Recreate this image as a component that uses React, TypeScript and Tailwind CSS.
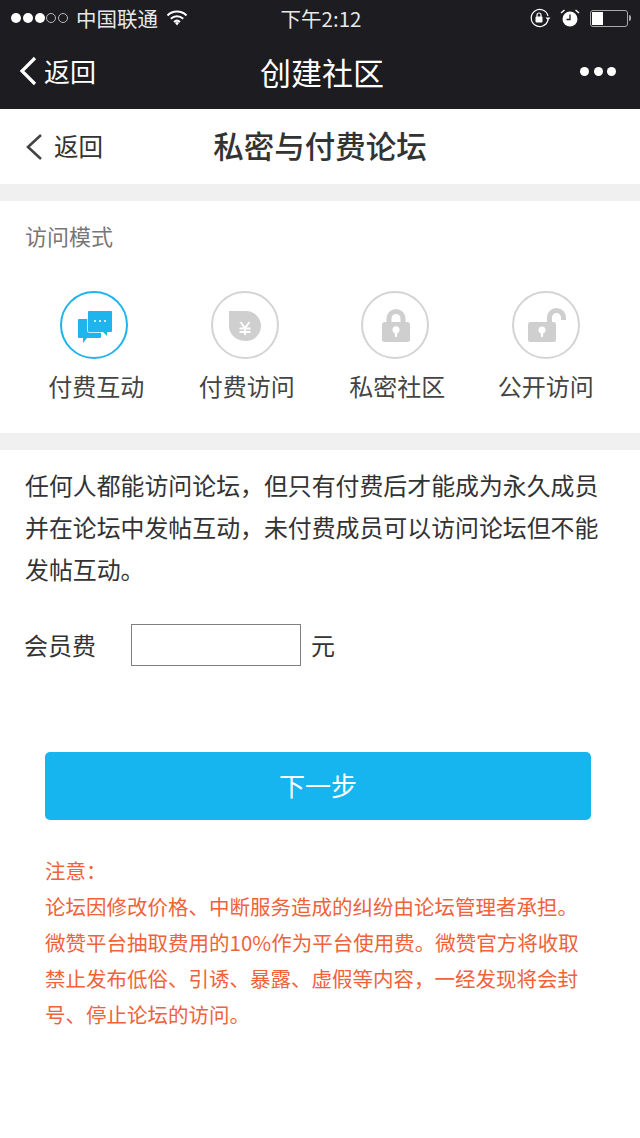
const cjk = { fontFamily: '"Noto Sans CJK SC", "Liberation Sans", sans-serif' };

function ChatIcon() {
  return (
    <svg className="ml-[2px] mt-[4px]" width="34" height="32" viewBox="0 0 34 32" fill="#1eb4ee">
      <path d="M0 9a1 1 0 0 1 1-1h21a1 1 0 0 1 1 1v17a1 1 0 0 1-1 1H9l-4 5v-5H1a1 1 0 0 1-1-1z" />
      <path d="M10 1a1 1 0 0 1 1-1h22a1 1 0 0 1 1 1v19a1 1 0 0 1-1 1h-4v4l-4-4H11a1 1 0 0 1-1-1z" stroke="#fff" strokeWidth="1.500" paintOrder="stroke" />
      <circle cx="17" cy="10" r="1" fill="#fff" />
      <circle cx="22" cy="10" r="1" fill="#fff" />
      <circle cx="27" cy="10" r="1" fill="#fff" />
    </svg>
  );
}

function YuanIcon() {
  return (
    <svg className="mt-[2px]" width="32" height="30" viewBox="0 0 32 30" fill="#cfcfcf">
      <path d="M0 0h17a15 15 0 0 1 0 30C8 30 0 24 0 15z" />
      <path d="M11.500 11l4.500 6 4.500-6M10.500 17.500h11M10.500 21h11M16 17v7" fill="none" stroke="#fff" strokeWidth="2" />
    </svg>
  );
}

function LockIcon() {
  return (
    <svg className="ml-[1px]" width="28" height="33" viewBox="0 0 28 33" fill="#cfcfcf">
      <path d="M7 14V9.500a7 7 0 0 1 14 0V14" fill="none" stroke="#cfcfcf" strokeWidth="5" />
      <rect x="0" y="13" width="28" height="20" rx="2.500" />
      <circle cx="14" cy="20.700" r="3.500" fill="#fff" />
      <path d="M12.500 22h3l-.6 6h-1.800z" fill="#fff" />
    </svg>
  );
}

function UnlockIcon() {
  return (
    <svg className="ml-[2px]" width="38" height="34" viewBox="0 0 38 34" fill="#cfcfcf">
      <path d="M21.500 15V9.500a7 7 0 0 1 14 0V12" fill="none" stroke="#cfcfcf" strokeWidth="5" />
      <rect x="0" y="14" width="28" height="20" rx="2.500" />
      <circle cx="14" cy="22" r="3.500" fill="#fff" />
      <path d="M12.500 23h3l-.6 6h-1.800z" fill="#fff" />
    </svg>
  );
}

function StatusBar() {
  return (
    <div className="flex h-[36px] items-center justify-between pl-[11px] pr-[9px] text-[#e8e8e8]">
      <div className="flex w-[220px] items-center">
        <div className="flex gap-[1.750px]">
          {[1, 2, 3].map(i => <span key={i} className="h-[10px] w-[10px] rounded-full bg-white" />)}
          {[4, 5].map(i => <span key={i} className="h-[10px] w-[10px] rounded-full border border-[#bbbbbb]" />)}
        </div>
        <span className="ml-[8px] text-[20.500px] leading-none">中国联通</span>
        <svg className="ml-[8px]" width="22" height="16" viewBox="0 0 22 16" fill="none" stroke="#fff" strokeWidth="2">
          <path d="M1.500 5.500a13.500 13.500 0 0 1 19 0M4.800 8.800a9 9 0 0 1 12.400 0M8 12a4.500 4.500 0 0 1 6 0" />
          <path d="M11 15.500l-2-2.500a3 3 0 0 1 4 0z" fill="#fff" stroke="none" />
        </svg>
      </div>
      <span className="text-[20.500px] leading-none">下午2:12</span>
      <div className="flex w-[220px] items-center justify-end">
        <svg width="22" height="20" viewBox="0 0 22 20" fill="none" stroke="#fff" strokeWidth="1.200">
          <path d="M19 12a8.500 8.500 0 1 1 0-4" />
          <path d="M16.500 9.500h5l-2.500 3z" fill="#fff" stroke="none" />
          <rect x="6.500" y="8.500" width="7" height="6" rx="1" fill="#fff" stroke="none" />
          <path d="M8 9V7a2 2 0 0 1 4 0v2" />
        </svg>
        <svg className="ml-[9px]" width="20" height="20" viewBox="0 0 20 20">
          <circle cx="10" cy="11" r="7.500" fill="#fff" />
          <path d="M10 6.500V11.500H6.500" fill="none" stroke="#1c1c21" strokeWidth="1.300" />
          <path d="M1 5l3.500-3M19 5l-3.500-3" stroke="#fff" strokeWidth="1.500" />
        </svg>
        <div className="ml-[10px] flex items-center">
          <div className="flex h-[17px] w-[38px] rounded-[3px] border border-[#a9a9ab] p-[1px]">
            <span className="w-[11px] bg-white" />
          </div>
          <span className="ml-[1px] h-[6px] w-[2px] rounded-r-sm bg-[#a9a9ab]" />
        </div>
      </div>
    </div>
  );
}

function WechatBar() {
  return (
    <div className="flex h-[73px] items-center justify-between pb-[3px] pl-[19px] pr-[24px] text-white">
      <div className="flex w-[150px] items-center">
        <svg width="18" height="30" viewBox="0 0 18 30" fill="none" stroke="#fff" strokeWidth="3.200">
          <path d="M16 2L3 15l13 13" />
        </svg>
        <span className="ml-[7px] text-[26px] leading-none">返回</span>
      </div>
      <span className="text-[31px] leading-none">创建社区</span>
      <div className="flex w-[141px] justify-end gap-[4.500px] pt-[1px]">
        {[1, 2, 3].map(i => <span key={i} className="h-[9px] w-[9px] rounded-full bg-white" />)}
      </div>
    </div>
  );
}

function PageHeader() {
  return (
    <div className="flex h-[75px] items-center justify-between pb-[3px] pl-[25px] pr-[25px] text-[#333333]">
      <div className="flex w-[150px] items-center pt-[3px]">
        <svg width="18" height="28" viewBox="0 0 18 28" fill="none" stroke="#444444" strokeWidth="2.600">
          <path d="M16 2L3 14l13 12" />
        </svg>
        <span className="ml-[11px] text-[24.500px] leading-none">返回</span>
      </div>
      <span className="text-[30.500px] font-medium leading-none">私密与付费论坛</span>
      <div className="w-[150px]" />
    </div>
  );
}

const modes = [
  { label: '付费互动', icon: <ChatIcon />, active: true, labelClass: 'ml-[4px]' },
  { label: '付费访问', icon: <YuanIcon />, active: false, labelClass: 'ml-[4px]' },
  { label: '私密社区', icon: <LockIcon />, active: false, labelClass: 'ml-[4px]' },
  { label: '公开访问', icon: <UnlockIcon />, active: false, labelClass: '' },
];

export default function App() {
  return (
    <div className="min-h-[1138px] w-[640px] overflow-hidden bg-white" style={cjk}>
      <div className="bg-[#1c1c21]">
        <StatusBar />
        <WechatBar />
      </div>
      <PageHeader />
      <div className="h-[17px] bg-[#f0f0f0]" />
      <div className="px-[25px] pt-[23px] text-[22px] leading-none text-[#777777]">访问模式</div>
      <div className="mt-[45px] grid grid-cols-4 px-[19px] pb-[35px]">
        {modes.map(mode => (
          <div key={mode.label} className="flex flex-col items-center">
            <div className={`flex h-[68px] w-[68px] items-center justify-center rounded-full border-2 ${mode.active ? 'border-[#1eb4ee]' : 'border-[#d4d4d4]'}`}>
              {mode.icon}
            </div>
            <span className={`mt-[15px] text-[24px] leading-none text-[#444444] ${mode.labelClass}`}>{mode.label}</span>
          </div>
        ))}
      </div>
      <div className="h-[17px] bg-[#f0f0f0]" />
      <p className="mt-[14px] px-[25px] text-[23.900px] leading-[42px] text-[#333333]">
        任何人都能访问论坛，但只有付费后才能成为永久成员并在论坛中发帖互动，未付费成员可以访问论坛但不能发帖互动。
      </p>
      <div className="mt-[34px] flex items-center pl-[24px]">
        <span className="w-[107px] text-[24px] leading-none text-[#333333]">会员费</span>
        <input className="h-[42px] w-[170px] border border-[#808080] bg-white" />
        <span className="ml-[10px] text-[24px] leading-none text-[#333333]">元</span>
      </div>
      <button className="mx-[45px] mt-[86px] block h-[68px] w-[546px] rounded-[5px] bg-[#16b5ef] pb-[4px] text-[26px] text-white">下一步</button>
      <div className="mt-[32px] px-[45px] text-[20.500px] leading-[36px] text-[#f0623a]">
        <p>注意：</p>
        <p>论坛因修改价格、中断服务造成的纠纷由论坛管理者承担。</p>
        <p>微赞平台抽取费用的10%作为平台使用费。微赞官方将收取</p>
        <p>禁止发布低俗、引诱、暴露、虚假等内容，一经发现将会封</p>
        <p>号、停止论坛的访问。</p>
      </div>
    </div>
  );
}
